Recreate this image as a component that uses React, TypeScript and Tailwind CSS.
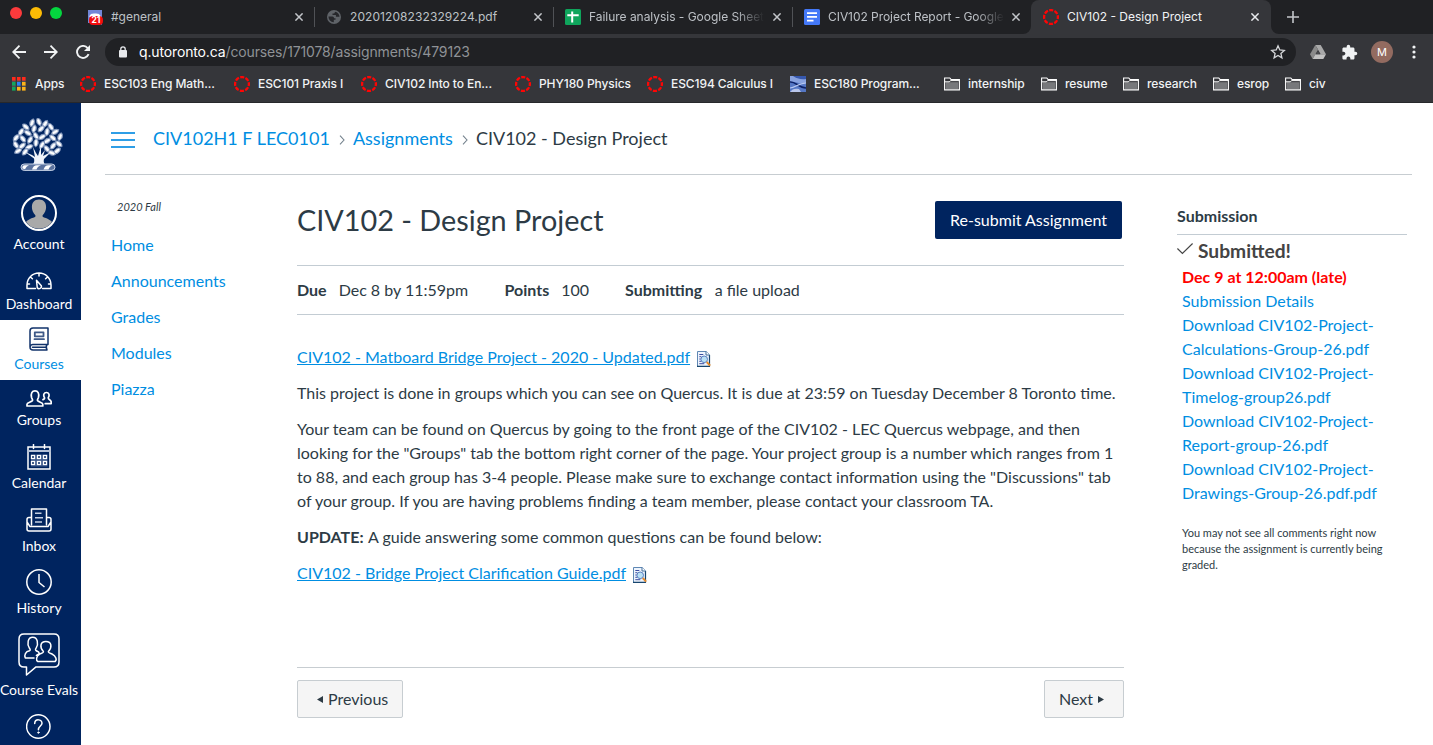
import React from "react";

const Ring = () => (
  <svg width="16" height="16" viewBox="0 0 16 16" className="shrink-0">
    <circle cx="8" cy="8" r="6.900" fill="none" stroke="#ff0505" strokeWidth="2.300" strokeDasharray="4.100 1.320" strokeDashoffset="2.050" />
  </svg>
);

const Folder = () => (
  <svg width="16" height="14" viewBox="0 0 16 14" className="shrink-0">
    <path d="M.6 12.900V1h5.200l1.400 1.600h8.200v10.300z" fill="#35363a" stroke="#fff" strokeWidth="1.100" />
    <path d="M1.600 5.200h12.800v6.800H1.600z" fill="#77787b" />
    <path d="M.6 4.800h4.600l1.600-1.200h8.600" fill="none" stroke="#fff" strokeWidth="1" />
  </svg>
);

const Close = ({ color }: { color: string }) => (
  <svg width="8" height="8" viewBox="0 0 8 8" className="shrink-0">
    <path d="M.4.4l7.200 7.200M7.600.4L.4 7.600" stroke={color} strokeWidth="1.500" />
  </svg>
);

const Discord = () => (
  <div className="relative h-4 w-4 shrink-0">
    <svg width="16" height="16" viewBox="0 0 16 16">
      <path d="M1 1h14v15l-3-2H1z" fill="#7286d6" />
      <path d="M2.500 8c0-3 2-3.600 5.500-3.600s5.500.6 5.500 3.600z" fill="#fff" />
    </svg>
    <span className="absolute left-[2px] top-[7px] flex h-[9px] w-[14px] items-center justify-center rounded-[4px] bg-[#f20d0d] font-['Inter',sans-serif] text-[8.5px] font-bold leading-none text-white">21</span>
  </div>
);

const Globe = () => (
  <svg width="14" height="14" viewBox="0 0 14 14" className="shrink-0">
    <circle cx="7" cy="7" r="7" fill="#5f6368" />
    <path d="M1.500 6.500h4c1 0 1.500 1 1.500 1.800h1.500v1.500H6.800v2.400C3.500 12 1.500 9.500 1.500 6.500zM8.500 1.700c-1 .5-1 1.300-1.400 1.900H5.500v1.500h3.400V6.800h3.600C12.500 4.500 11 2.300 8.500 1.700z" fill="#26272b" />
  </svg>
);

const Sheets = () => (
  <svg width="16" height="16" viewBox="0 0 16 16" className="shrink-0">
    <rect width="16" height="16" rx="1.500" fill="#0fa55c" />
    <path d="M7.200 2.500v11M2.300 6.300h11.400" stroke="#fff" strokeWidth="2" />
  </svg>
);

const Docs = () => (
  <svg width="16" height="16" viewBox="0 0 16 16" className="shrink-0">
    <rect width="16" height="16" rx="1.500" fill="#4479f8" />
    <path d="M3 4.200h10M3 7.900h10M3 11.700h6.500" stroke="#fff" strokeWidth="1.700" />
  </svg>
);

const Photo = () => (
  <svg width="16" height="16" viewBox="0 0 16 16" className="shrink-0">
    <rect width="16" height="16" fill="#5577c4" />
    <path d="M0 0h16v7C10 9 5 5 0 6z" fill="#88a2df" />
    <path d="M3 0c3 2 8 4 13 3V0z" fill="#3658ae" />
    <path d="M0 6c5-1 9 6 16 6" fill="none" stroke="#0d2166" strokeWidth="1.600" />
    <path d="M0 12c5 0 9-5 16-5" fill="none" stroke="#b9c9f2" strokeWidth="1.200" />
    <path d="M0 16c2-3 5-4 9-3l2 3z" fill="#b9c6ea" />
  </svg>
);

const appColors = ["#ff2a1c", "#ff2a1c", "#ff2a1c", "#12a65c", "#2b82f6", "#fbb41a", "#12a65c", "#fbb41a", "#fbb41a"];
const AppsGrid = () => (
  <svg width="14" height="14" viewBox="0 0 14 14" className="shrink-0">
    {[0, 1, 2].map((c) => (
      <g key={c} fill="#77797d">
        <rect x={c * 5} y="3.600" width="3.600" height=".8" />
        <rect x={c * 5} y="8.600" width="3.600" height=".8" />
      </g>
    ))}
    {appColors.map((c, i) => (
      <rect key={i} x={(i % 3) * 5} y={Math.floor(i / 3) * 5} width="3.600" height="3.600" fill={c} />
    ))}
  </svg>
);

type TabProps = { icon: React.ReactNode; title: string; width: string; pad: string; titleW: string; fade?: boolean; sep?: boolean };
const Tab = ({ icon, title, width, pad, titleW, fade, sep }: TabProps) => (
  <div className={`flex h-full shrink-0 items-center text-[#bdc1c6] ${width} ${pad}`}>
    {icon}
    <span
      className={`whitespace-nowrap ${titleW} ${fade ? "[mask-image:linear-gradient(to_right,#000_84%,transparent)]" : ""}`}
    >
      {title}
    </span>
    <div className="ml-auto flex items-center">
      <Close color="#c3c6ca" />
      <div className={`ml-[11px] h-5 w-px ${sep ? "bg-[#505256]" : ""}`} />
    </div>
  </div>
);

const Browser = () => (
  <div className="h-[103px] shrink-0 border-b border-[#27282b] bg-[#35363a] font-['Inter',sans-serif] text-[12px]">
    <div className="flex h-[34px] bg-[#202124]">
      <div className="flex w-[87px] shrink-0 gap-2 pl-[10px] pt-[7px]">
        <i className="h-3 w-3 rounded-full bg-[#fc3a3c]" />
        <i className="h-3 w-3 rounded-full bg-[#fdbc05]" />
        <i className="h-3 w-3 rounded-full bg-[#04d63f]" />
      </div>
      <Tab icon={<Discord />} title="#general" width="w-[228px]" pad="" titleW="ml-2" sep />
      <Tab icon={<Globe />} title="20201208232329224.pdf" width="w-[239px]" pad="pl-3" titleW="ml-[9px] tracking-[0.08px]" sep />
      <Tab icon={<Sheets />} title="Failure analysis - Google Sheet" width="w-[239px]" pad="pl-[11px]" titleW="ml-2 tracking-[-0.03px]" fade sep />
      <Tab icon={<Docs />} title="CIV102 Project Report - Google" width="w-[239px]" pad="pl-[11px]" titleW="ml-2 tracking-[-0.05px]" fade />
      <div className="relative -ml-px flex h-full w-[240px] shrink-0 items-center rounded-t-[8px] bg-[#35363a] pl-3 pr-3 text-[#f1f3f4]">
        <svg width="8" height="8" viewBox="0 0 8 8" className="absolute -left-2 bottom-0"><path d="M8 0v8H0a8 8 0 0 0 8-8z" fill="#35363a" /></svg>
        <svg width="8" height="8" viewBox="0 0 8 8" className="absolute -right-2 bottom-0"><path d="M0 0v8h8a8 8 0 0 1-8-8z" fill="#35363a" /></svg>
        <Ring />
        <span className="ml-2 whitespace-nowrap">CIV102 - Design Project</span>
        <span className="ml-auto flex"><Close color="#e8eaed" /></span>
      </div>
      <div className="flex items-center pl-4">
        <svg width="12" height="12" viewBox="0 0 12 12"><path d="M6 0v12M0 6h12" stroke="#c3c6ca" strokeWidth="1.600" /></svg>
      </div>
    </div>
    <div className="flex h-8 items-end">
      <div className="flex h-7 w-[105px] shrink-0 items-center gap-[18px] pl-3">
        <svg width="14" height="14" viewBox="0 0 14 14"><path d="M14 7H1.500M7.500.7L1.200 7l6.300 6.300" fill="none" stroke="#f1f3f4" strokeWidth="1.800" /></svg>
        <svg width="14" height="14" viewBox="0 0 14 14"><path d="M0 7h12.500M6.500.7L12.800 7l-6.300 6.300" fill="none" stroke="#f1f3f4" strokeWidth="1.800" /></svg>
        <svg width="15" height="14" viewBox="0 0 15 14"><path d="M12.600 9.200A6 6 0 1 1 11.600 3L13 4.500" fill="none" stroke="#f1f3f4" strokeWidth="1.900" /><path d="M14 0v6H8z" fill="#f1f3f4" /></svg>
      </div>
      <div className="flex h-7 w-[1191px] shrink-0 items-center rounded-full bg-[#202124] pl-[14px] pr-[10px] text-[14px] tracking-[-0.14px]">
        <svg width="8" height="12" viewBox="0 0 8 12"><rect y="4" width="8" height="7.500" rx="1" fill="#e8eaed" /><path d="M1.800 5V3a2.200 2.200 0 0 1 4.400 0v2" fill="none" stroke="#e8eaed" strokeWidth="1.300" /></svg>
        <span className="-mt-[2px] ml-3 whitespace-nowrap text-[#8f9296]"><span className="text-white">q.utoronto.ca</span>/courses/171078/assignments/479123</span>
        <svg width="16" height="16" viewBox="0 0 16 16" className="ml-auto"><path d="M8 1.800l1.800 4.200 4.500.4-3.400 3 1 4.400L8 11.500l-3.900 2.300 1-4.400-3.400-3 4.500-.4z" fill="none" stroke="#d5d7da" strokeWidth="1.300" /></svg>
      </div>
      <div className="flex h-7 items-center">
        <svg width="16" height="14" viewBox="0 0 16 14" className="ml-[14px]">
          <path d="M5.300 0h5.400L16 9.200h-5.300z" fill="#a9a9a9" /><path d="M5.300 0L0 9.200 2.700 14 8 4.700z" fill="#8a8a8a" /><path d="M5.400 9.200H16L13.300 14H2.700z" fill="#c2c2c2" /><path d="M8 5.700l2 3.500H6z" fill="#4a4b4e" />
        </svg>
        <svg width="17" height="17" viewBox="0 0 24 24" className="ml-[15px]">
          <path fill="#f1f3f4" d="M20.500 11H19V7c0-1.100-.9-2-2-2h-4V3.500a2.500 2.500 0 0 0-5 0V5H4c-1.100 0-1.990.9-1.990 2v3.800H3.500c1.490 0 2.700 1.210 2.700 2.700s-1.210 2.700-2.700 2.700H2V20c0 1.100.9 2 2 2h3.800v-1.500c0-1.490 1.210-2.700 2.700-2.700s2.700 1.210 2.700 2.700V22H17c1.100 0 2-.9 2-2v-4h1.500a2.500 2.500 0 0 0 0-5z" />
        </svg>
        <div className="ml-[13px] flex h-[22px] w-[22px] items-center justify-center rounded-full bg-[#936b60] text-[11px] text-white">M</div>
        <svg width="4" height="14" viewBox="0 0 4 14" className="ml-[19px]"><g fill="#f1f3f4"><circle cx="2" cy="2" r="1.600" /><circle cx="2" cy="7" r="1.600" /><circle cx="2" cy="12" r="1.600" /></g></svg>
      </div>
    </div>
    <div className="flex h-9 items-center whitespace-nowrap font-medium tracking-[-0.08px] text-[#f1f3f4]">
      <div className="flex w-[80px] shrink-0 items-center gap-[9px] pl-3"><AppsGrid /><span>Apps</span></div>
      <div className="flex w-[154px] shrink-0 items-center gap-2"><Ring /><span>ESC103 Eng Math...</span></div>
      <div className="flex w-[127px] shrink-0 items-center gap-2"><Ring /><span>ESC101 Praxis I</span></div>
      <div className="flex w-[154px] shrink-0 items-center gap-2"><Ring /><span>CIV102 Into to En...</span></div>
      <div className="flex w-[132px] shrink-0 items-center gap-2"><Ring /><span>PHY180 Physics</span></div>
      <div className="flex w-[143px] shrink-0 items-center gap-2"><Ring /><span>ESC194 Calculus I</span></div>
      <div className="flex w-[154px] shrink-0 items-center gap-2"><Photo /><span>ESC180 Program...</span></div>
      <div className="flex w-[97px] shrink-0 items-center gap-2"><Folder /><span>internship</span></div>
      <div className="flex w-[82px] shrink-0 items-center gap-2"><Folder /><span>resume</span></div>
      <div className="flex w-[90px] shrink-0 items-center gap-2"><Folder /><span>research</span></div>
      <div className="flex w-[72px] shrink-0 items-center gap-2"><Folder /><span>esrop</span></div>
      <div className="flex shrink-0 items-center gap-2"><Folder /><span>civ</span></div>
    </div>
  </div>
);

const leaves: [number, number, number][] = [
  [20, 5, 20], [27, 4, -20], [33, 6, 35], [14, 9, -50], [22, 11, 15], [29, 11, 45], [39, 9, -35], [9, 14, 35], [16, 15, -60],
  [35, 14, 10], [43, 14, 60], [24, 18, -30], [41, 20, -50], [48, 19, 20], [4, 20, 40], [11, 21, -40],
  [18, 22, 30], [30, 19, 60], [35, 23, 60], [47, 26, -50], [4, 27, -30], [10, 28, 50], [24, 25, 5],
  [41, 28, 40], [17, 29, 70], [6, 33, 60], [13, 34, 40], [30, 27, 30], [35, 31, -40], [45, 33, 50], [40, 35, -70],
];
const Tree = () => (
  <svg width="52" height="54" viewBox="0 0 52 54">
    {leaves.map(([x, y, r], i) => (
      <g key={i} transform={`translate(${x} ${y}) rotate(${r})`}>
        <path d="M0-4.400c3 2.200 3 6 0 8.400c-3-2.400-3-6.200 0-8.400z" fill="#c3cfe2" stroke="#7f93b8" strokeWidth=".9" />
        <path d="M0-2.600v5" stroke="#fff" strokeWidth="1.900" />
      </g>
    ))}
    <path d="M13 34l7 3 3 2-2-10 3 6 2 3 3-10 0 9 4-5-2 6 8-4-7 7c-1 4 1 6 4 7.500H17c4-1.500 6-3.500 5-8z" fill="#f0f4fa" />
    <rect x="9" y="46" width="34" height="6.400" rx="3.200" fill="#5a729f" stroke="#c8d3e6" />
    <path d="M10.500 50.500c-.5-2 .5-3.300 2-3.300h4.500c-2 .8-3 2-4 4zM20 51.500c1-2.800 2.500-4.300 5-4.300h4c-2.500.8-4 2.300-4.500 4.300zM31.500 51.500c1-2.800 2.500-4.300 5-4.300h4c-2 .8-3.500 2.300-4 4.300z" fill="#fff" />
  </svg>
);

const Avatar = () => (
  <svg width="36" height="36" viewBox="0 0 36 36">
    <circle cx="18" cy="18" r="17" fill="#00245f" stroke="#fff" strokeWidth="2" />
    <path d="M5 27c3-3.500 7-4 9.200-5l.3-1.600C9 15 9.500 4.500 18 4.500s9 10.500 3.500 15.900l.3 1.600c2.200 1 6.200 1.500 9.200 5A16 16 0 0 1 5 27z" fill="#a9a9a9" />
  </svg>
);

const stroke = { fill: "none", stroke: "#fff", strokeWidth: 1.5, strokeLinejoin: "round" as const, strokeLinecap: "round" as const };

const DashIcon = () => (
  <svg width="26" height="18" viewBox="0 0 26 18" {...stroke}>
    <path d="M9.500 16.500H1V13a12 12 0 0 1 24 0v3.500h-8.500M13 1v3M4.700 5.200l1.700 1.600M21.300 5.200l-1.700 1.600M1.500 12h2M22.500 12h2" />
    <path d="M10.500 8.200l4.600 5.200c1.300 2.800-2.600 4.600-3.900 1.900z" />
  </svg>
);
const CourseIcon = () => (
  <svg width="20" height="24" viewBox="0 0 20 24" {...stroke} stroke="#12336b">
    <path d="M19 1H4C2 1 1 2 1 4v16c0 2 1 3 3 3h14M1.200 19.500C1.500 18 2.500 17.400 4 17.400h15V1M18 17.500c-1 1.500-1 3.500 0 5.300M3.500 20.300H17.500" />
    <path d="M5.800 5.300h8.700v4H5.800zM5.500 12.200h9.500" stroke="#3f5a88" strokeWidth="1.800" />
  </svg>
);
const GroupIcon = () => (
  <svg width="26" height="17" viewBox="0 0 26 17" {...stroke} strokeWidth={1.7}>
    <path d="M1 16v-1.800c0-1.700 4.500-2 5.500-3.700.4-.8-.6-1.600-1-3.200C4.700 3.500 6 .9 9 .9s4.300 2.600 3.500 6.400c-.4 1.600-1.400 2.400-1 3.200 1 1.700 5.300 2 5.300 3.700V16z" />
    <path d="M17 9.600c1.300-.5 1.800-1.100 1.500-1.900-1.600-2.800-.5-5.200 1.900-5.200s3.500 2.400 1.900 5.200c-.5 2 2.900 2 2.900 4.300v1.700h-6" />
  </svg>
);
const CalIcon = () => (
  <svg width="24" height="26" viewBox="0 0 24 26" {...stroke} strokeLinejoin="miter">
    <path d="M4 10.500h16.500v12H4z" fill="#3f5b8c" stroke="none" />
    <path d="M1 3h22v22H1zM6.500.5v4M17.500.5v4" />
    <path d="M1 7h22" stroke="#b4c1d6" strokeWidth="2" />
    {[0, 1, 2, 3, 4, 5].map((i) => (
      <rect key={i} x={4.500 + (i % 3) * 6} y={11.500 + Math.floor(i / 3) * 6} width="3" height="3" strokeWidth="1.300" fill="#00245f" />
    ))}
  </svg>
);
const InboxIcon = () => (
  <svg width="26" height="24" viewBox="0 0 26 24" {...stroke}>
    <path d="M5.500 17V1h15v16" />
    <path d="M5 9.500H3c-1 0-2 1-2 2V21c0 1.200.8 2 2 2h20c1.200 0 2-.8 2-2v-9.500c0-1-1-2-2-2h-2M1 14l3 4.500h18l3-4.500" />
    <path d="M9 5.300h6.500M9 9.700h8M9 14h7" stroke="#c5d0e2" strokeLinecap="butt" />
  </svg>
);
const HistoryIcon = () => (
  <svg width="26" height="26" viewBox="0 0 26 26" {...stroke}>
    <circle cx="13" cy="13" r="12.200" />
    <path d="M13 5v8.500l5.500 4.500" strokeLinecap="butt" />
  </svg>
);
const EvalIcon = () => (
  <svg width="42" height="43" viewBox="0 0 42 43" {...stroke}>
    <path d="M6 .9h30c3.500 0 5 1.500 5 5v23c0 3.500-1.500 5-5 5H18L8.500 42v-8H6c-3.500 0-5-1.500-5-5V6C1 2.500 2.500.9 6 .9z" />
    <path d="M16 25H7.300c-1.300-3 .2-6.500 4.200-7.200 1-.5.800-1.400 0-2.500C8.600 11 9.800 4.300 14.700 4.300s6.100 6.400 3.400 10.900c-.8 1.200-.8 2.100.3 2.500" />
    <path d="M19.800 28.500c-1.800-.8-2-5.500 2-7.500 1.800-.8 4-1.200 3.600-2.500-3.900-4-3.400-10 2.500-10s6.400 6 2.500 10c-.4 1.300 1.800 1.700 3.600 2.500 4 2 5.300 6 3 7.500z" />
    <path d="M18.400 17.700c2 .8 2.900 1.700 3 2.900l-3 1.700" />
  </svg>
);
const HelpIcon = () => (
  <svg width="26" height="25" viewBox="0 0 26 25" {...stroke}>
    <circle cx="12.300" cy="12.500" r="11.700" />
    <path d="M8.700 9.500c.2-5 7.400-4.600 7.300-.2 0 2.700-3.600 2.900-3.600 6.400" />
    <circle cx="12.400" cy="18.600" r=".7" fill="#fff" strokeWidth="1" />
  </svg>
);

const NavItem = ({ h, label, icon, active, tight }: { h: string; label: string; icon: React.ReactNode; active?: boolean; tight?: string }) => (
  <div className={`flex shrink-0 flex-col items-center justify-end pb-[6px] pr-[3px] ${h} ${tight ?? "gap-[3px]"} ${active ? "bg-white text-[#008ee2]" : "text-white"}`}>
    {icon}
    <span className="whitespace-nowrap text-[14px] leading-5">{label}</span>
  </div>
);

const SideNav = () => (
  <nav className="flex w-[81px] shrink-0 flex-col overflow-hidden bg-[#00245f]">
    <div className="flex h-[81px] shrink-0 justify-center pr-[6px] pt-[15px]"><Tree /></div>
    <NavItem h="h-[76px]" label="Account" icon={<Avatar />} />
    <NavItem h="h-[60px]" label="Dashboard" icon={<DashIcon />} tight="gap-1" />
    <NavItem h="h-[60px]" label="Courses" icon={<CourseIcon />} active />
    <NavItem h="h-[56px]" label="Groups" icon={<GroupIcon />} />
    <NavItem h="h-[63px]" label="Calendar" icon={<CalIcon />} />
    <NavItem h="h-[63px]" label="Inbox" icon={<InboxIcon />} tight="gap-1" />
    <NavItem h="h-[62px]" label="History" icon={<HistoryIcon />} />
    <NavItem h="h-[82px]" label="Course Evals" icon={<EvalIcon />} tight="gap-1" />
    <div className="flex shrink-0 justify-center pr-[3px] pt-2"><HelpIcon /></div>
  </nav>
);

const DocPreview = () => (
  <svg width="14" height="16" viewBox="0 0 14 16" className="mt-[4px] shrink-0">
    <path d="M.5.500h8.700l3.300 3.300v11.700H.5z" fill="#eef4fd" stroke="#5f88b4" />
    <path d="M0 15.300h13M12.500 4v11.500" stroke="#17456e" strokeWidth="1.200" />
    <path d="M9 .5V4h3.500" fill="#fff" stroke="#436f9c" />
    <path d="M2.300 3.500h4M2.300 5.700h2M2.300 8h1.500M2.300 10.300h2M2.300 12.700h5" stroke="#3c4da0" />
    <circle cx="7.200" cy="8.300" r="3.300" fill="#b9e0f5" stroke="#5b7fc0" />
    <path d="M9.700 11l3.500 3.700" stroke="#e58a2c" strokeWidth="1.900" />
  </svg>
);

const FileLink = ({ children }: { children: string }) => (
  <p className="flex items-center gap-[7px]">
    <a className="whitespace-nowrap text-[#008ee2] underline">{children}</a>
    <DocPreview />
  </p>
);

const Content = () => (
  <main className="w-[827px] shrink-0">
    <div className="flex h-[64px] items-start justify-between pr-[2px]">
      <h1 className="mt-[1px] whitespace-nowrap text-[28.8px] leading-9">CIV102 - Design Project</h1>
      <button className="h-[38px] w-[187px] whitespace-nowrap rounded-[2px] bg-[#00245f] text-[16px] text-white">Re-submit Assignment</button>
    </div>
    <div className="flex h-[50px] items-center whitespace-nowrap border-y border-[#c3ccd3] text-[16px]">
      <div className="flex w-[207.500px] gap-[12px]"><b>Due</b><span>Dec 8 by 11:59pm</span></div>
      <div className="flex w-[120.500px] gap-[12px]"><b>Points</b><span>100</span></div>
      <div className="flex gap-[12.500px]"><b>Submitting</b><span>a file upload</span></div>
    </div>
    <div className="mt-[30px] flex h-[322px] flex-col gap-3 whitespace-nowrap text-[16px] leading-6">
      <FileLink>CIV102 - Matboard Bridge Project - 2020 - Updated.pdf</FileLink>
      <p>This project is done in groups which you can see on Quercus. It is due at 23:59 on Tuesday December 8 Toronto time.</p>
      <p>
        Your team can be found on Quercus by going to the front page of the CIV102 - LEC Quercus webpage, and then<br />
        looking for the "Groups" tab the bottom right corner of the page. Your project group is a number which ranges from 1<br />
        to 88, and each group has 3-4 people. Please make sure to exchange contact information using the "Discussions" tab<br />
        of your group. If you are having problems finding a team member, please contact your classroom TA.
      </p>
      <p><b className="mr-px">UPDATE:</b> A guide answering some common questions can be found below:</p>
      <FileLink>CIV102 - Bridge Project Clarification Guide.pdf</FileLink>
    </div>
    <div className="flex items-start justify-between border-t border-[#c7cdd1] pt-3 text-[16px]">
      <button className="flex h-[38px] w-[106px] items-center rounded-[2px] border border-[#c7cdd1] bg-[#f5f5f5] pl-[19px]">
        <svg width="6" height="7" viewBox="0 0 6 7" className="mr-[5px]"><path d="M6 0v7L0 3.500z" fill="#2d3b45" /></svg>Previous
      </button>
      <button className="flex h-[38px] w-20 items-center rounded-[2px] border border-[#c7cdd1] bg-[#f5f5f5] pl-[14px]">
        Next<svg width="6" height="7" viewBox="0 0 6 7" className="ml-[5px]"><path d="M0 0v7l6-3.500z" fill="#2d3b45" /></svg>
      </button>
    </div>
  </main>
);

const files = [
  "Submission Details",
  "Download CIV102-Project-",
  "Calculations-Group-26.pdf",
  "Download CIV102-Project-",
  "Timelog-group26.pdf",
  "Download CIV102-Project-",
  "Report-group-26.pdf",
  "Download CIV102-Project-",
  "Drawings-Group-26.pdf.pdf",
];

const Aside = () => (
  <aside className="ml-[53px] w-[230px] shrink-0 whitespace-nowrap pt-[3px] text-[16px] leading-6">
    <h2 className="h-[31px] border-b border-[#c3ccd3] font-bold">Submission</h2>
    <div className="mt-1 flex h-6 items-center gap-[5px] text-[19.2px] font-bold text-[#444]">
      <svg width="16" height="12" viewBox="0 0 16 12" className="-mt-[5px]"><path d="M.4 5.500l5 5L15.600.5" fill="none" stroke="#444" strokeWidth="1.200" /></svg>
      <span>Submitted!</span>
    </div>
    <div className="mt-[2px] pl-[5px]">
      <div className="font-bold text-[#f00]">Dec 9 at 12:00am (late)</div>
      {files.map((f, i) => (
        <div key={i} className="text-[#008ee2]">{f}</div>
      ))}
      <p className="mt-5 text-[11px] leading-4">
        You may not see all comments right now<br />because the assignment is currently being<br />graded.
      </p>
    </div>
  </aside>
);

const Chevron = () => (
  <svg width="6" height="10" viewBox="0 0 6 10" className="mt-[3px]"><path d="M1 .7L5 5 1 9.300" fill="none" stroke="#73818c" strokeWidth="1.100" /></svg>
);

export default function App() {
  return (
    <div className="flex h-[745px] w-[1433px] flex-col overflow-hidden bg-white font-['Lato',sans-serif] text-[#2d3b45]">
      <Browser />
      <div className="flex min-h-0 flex-1">
        <SideNav />
        <div className="flex min-w-0 flex-1 flex-col pl-6">
          <header className="flex h-[72px] w-[1307px] shrink-0 items-center whitespace-nowrap border-b border-[#c7cdd1] pl-[6px] text-[18px]">
            <svg width="24" height="16" viewBox="0 0 24 16" className="mt-[2px]"><path d="M0 1h24M0 8h24M0 15h24" stroke="#2f9ee6" strokeWidth="1.800" /></svg>
            <a className="ml-[18px] text-[#008ee2]">CIV102H1 F LEC0101</a>
            <span className="ml-[9px] mr-2"><Chevron /></span>
            <a className="text-[#008ee2]">Assignments</a>
            <span className="ml-[9px] mr-2"><Chevron /></span>
            <span>CIV102 - Design Project</span>
          </header>
          <div className="flex pt-[26px]">
            <div className="w-[192px] shrink-0 pl-[6px]">
              <div className="pl-[6px] text-[11px] italic leading-3">2020 Fall</div>
              <ul className="mt-[14px] text-[16px] leading-9 text-[#008ee2]">
                {["Home", "Announcements", "Grades", "Modules", "Piazza"].map((t) => (
                  <li key={t}>{t}</li>
                ))}
              </ul>
            </div>
            <Content />
            <Aside />
          </div>
        </div>
      </div>
    </div>
  );
}
